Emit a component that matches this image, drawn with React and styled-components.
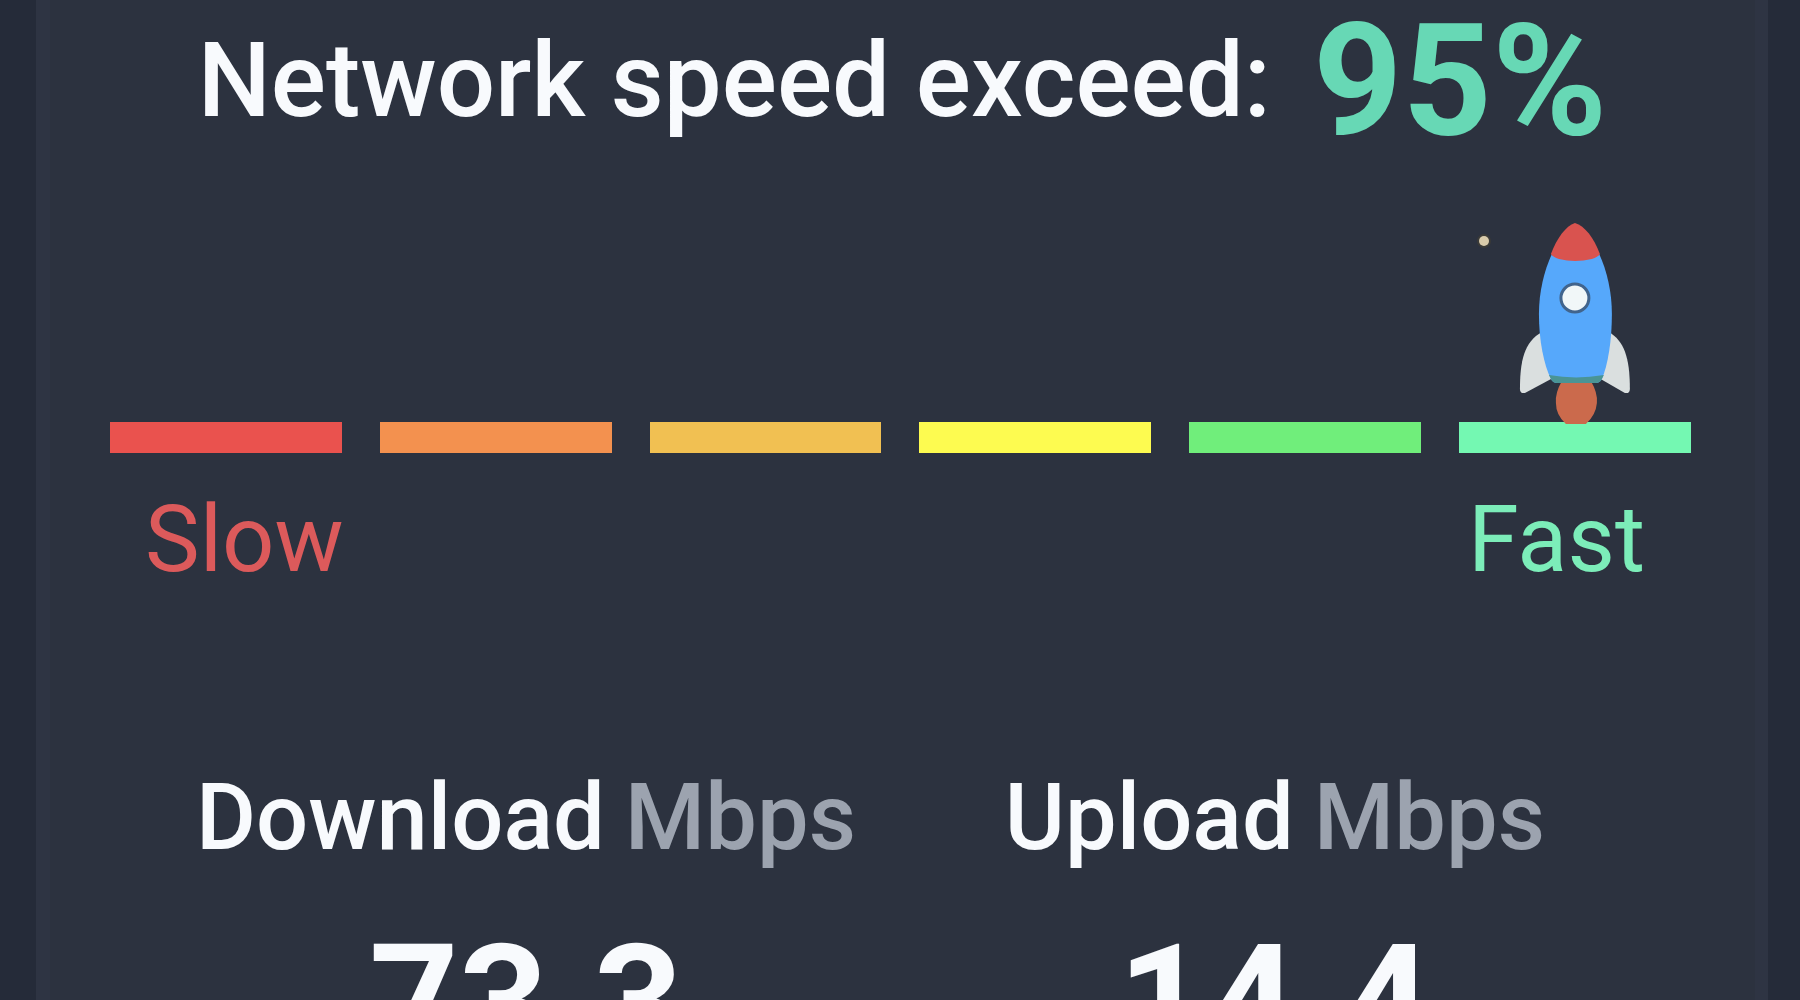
import React from "react";
import styled, { createGlobalStyle } from "styled-components";

const colors = {
  page: "#252b39",
  panel: "#2c323f",
  edge: "#2e3443",
  text: "#f8fafd",
  unit: "#9ca3af",
  score: "#67d8b5",
  slow: "#dc5a5b",
  fast: "#7cedb9",
};

const sizes = {
  label: "92px",
  title: "103px",
  number: "156px",
};

const levels = [
  "#ea524e",
  "#f3914f",
  "#f1c052",
  "#fdfb50",
  "#70ee7b",
  "#74f8b2",
];

const results = [
  { name: "Download", value: "73.3" },
  { name: "Upload", value: "14.4" },
];

const GlobalStyle = createGlobalStyle`
  * {
    box-sizing: border-box;
  }
  body {
    margin: 0;
    background: ${colors.page};
    color: ${colors.text};
    font-family: Roboto, "Liberation Sans", sans-serif;
    overflow: hidden;
  }
`;

const Panel = styled.main`
  min-height: 100vh;
  margin: 0 32px 0 36px;
  padding: 0 64px 0 60px;
  background: ${colors.panel};
  border: solid ${colors.edge};
  border-width: 0 13px 0 14px;
`;

const Title = styled.h1`
  display: flex;
  align-items: center;
  justify-content: center;
  gap: 42px;
  margin: 0;
  padding: 0 0 53px 4px;
  font-size: ${sizes.title};
  font-weight: 500;
  line-height: 162px;
  white-space: nowrap;
`;

const Score = styled.strong`
  color: ${colors.score};
  font-size: ${sizes.number};
  font-weight: 700;
`;

const Scale = styled.div`
  display: grid;
  grid-template-columns: repeat(6, 1fr);
  column-gap: 38px;
`;

const Rocket = styled.svg`
  grid-column: 6;
  display: block;
  width: 100%;
  height: 207px;
  overflow: visible;
`;

const Segment = styled.span`
  grid-row: 2;
  height: 31px;
  background: ${(props) => props.$color};
`;

const Legend = styled.div`
  display: flex;
  justify-content: space-between;
  padding: 33px 46px 0 35px;
  font-size: ${sizes.label};
  line-height: 108px;
`;

const LegendItem = styled.span`
  color: ${(props) => props.$color};
`;

const Results = styled.dl`
  display: flex;
  justify-content: space-between;
  margin: 170px 0 0;
  padding: 0 146px 0 86px;
`;

const Result = styled.div`
  text-align: center;
`;

const ResultName = styled.dt`
  display: flex;
  gap: 20px;
  font-size: ${sizes.label};
  font-weight: 500;
  line-height: 108px;
`;

const Unit = styled.span`
  color: ${colors.unit};
`;

const ResultValue = styled.dd`
  margin: 38px 0 0;
  font-size: ${sizes.number};
  font-weight: 700;
  line-height: 184px;
`;

const RocketIcon = () => (
  <Rocket viewBox="0 0 232 207" aria-hidden="true">
    <circle cx="25" cy="26" r="7" fill="#3a3a38" />
    <circle cx="25" cy="26" r="5" fill="#d9cbab" />
    <path
      d="M83 117C67 126 61 142 61 174Q61 179 66 178L94 163Z"
      fill="#dadfdf"
    />
    <path
      d="M150 117C165 126 171 142 171 174Q171 179 166 178L140 163Z"
      fill="#dadfdf"
    />
    <path
      d="M103 166H132Q139 178 138 188Q137 200 127 209H107Q97 200 97 188Q96 178 103 166Z"
      fill="#cb6a4c"
    />
    <path
      d="M116 9C98 20 80 58 80 99C80 126 85 150 92 164Q94 168 98 168H137Q141 168 143 164C149 150 153 126 153 99C153 58 136 20 116 9Z"
      fill="#56a8fb"
    />
    <path
      d="M90 160L92 164Q94 168 98 168H137Q141 168 143 164L145 160Q117 165 90 160Z"
      fill="#4a9495"
    />
    <path
      d="M116 8C107 11 98 23 92 39Q94 42 100 44Q116 48 133 44Q139 42 141 39C135 23 126 11 116 8Z"
      fill="#d9534f"
    />
    <circle cx="116" cy="83" r="14" fill="#f1f7f8" stroke="#41648c" strokeWidth="3" />
  </Rocket>
);

const App = () => (
  <>
    <GlobalStyle />
    <Panel>
      <Title>
        Network speed exceed:
        <Score>95%</Score>
      </Title>
      <Scale>
        {levels.map((color) => (
          <Segment key={color} $color={color} />
        ))}
        <RocketIcon />
      </Scale>
      <Legend>
        <LegendItem $color={colors.slow}>Slow</LegendItem>
        <LegendItem $color={colors.fast}>Fast</LegendItem>
      </Legend>
      <Results>
        {results.map((result) => (
          <Result key={result.name}>
            <ResultName>
              {result.name} <Unit>Mbps</Unit>
            </ResultName>
            <ResultValue>{result.value}</ResultValue>
          </Result>
        ))}
      </Results>
    </Panel>
  </>
);

export default App;
